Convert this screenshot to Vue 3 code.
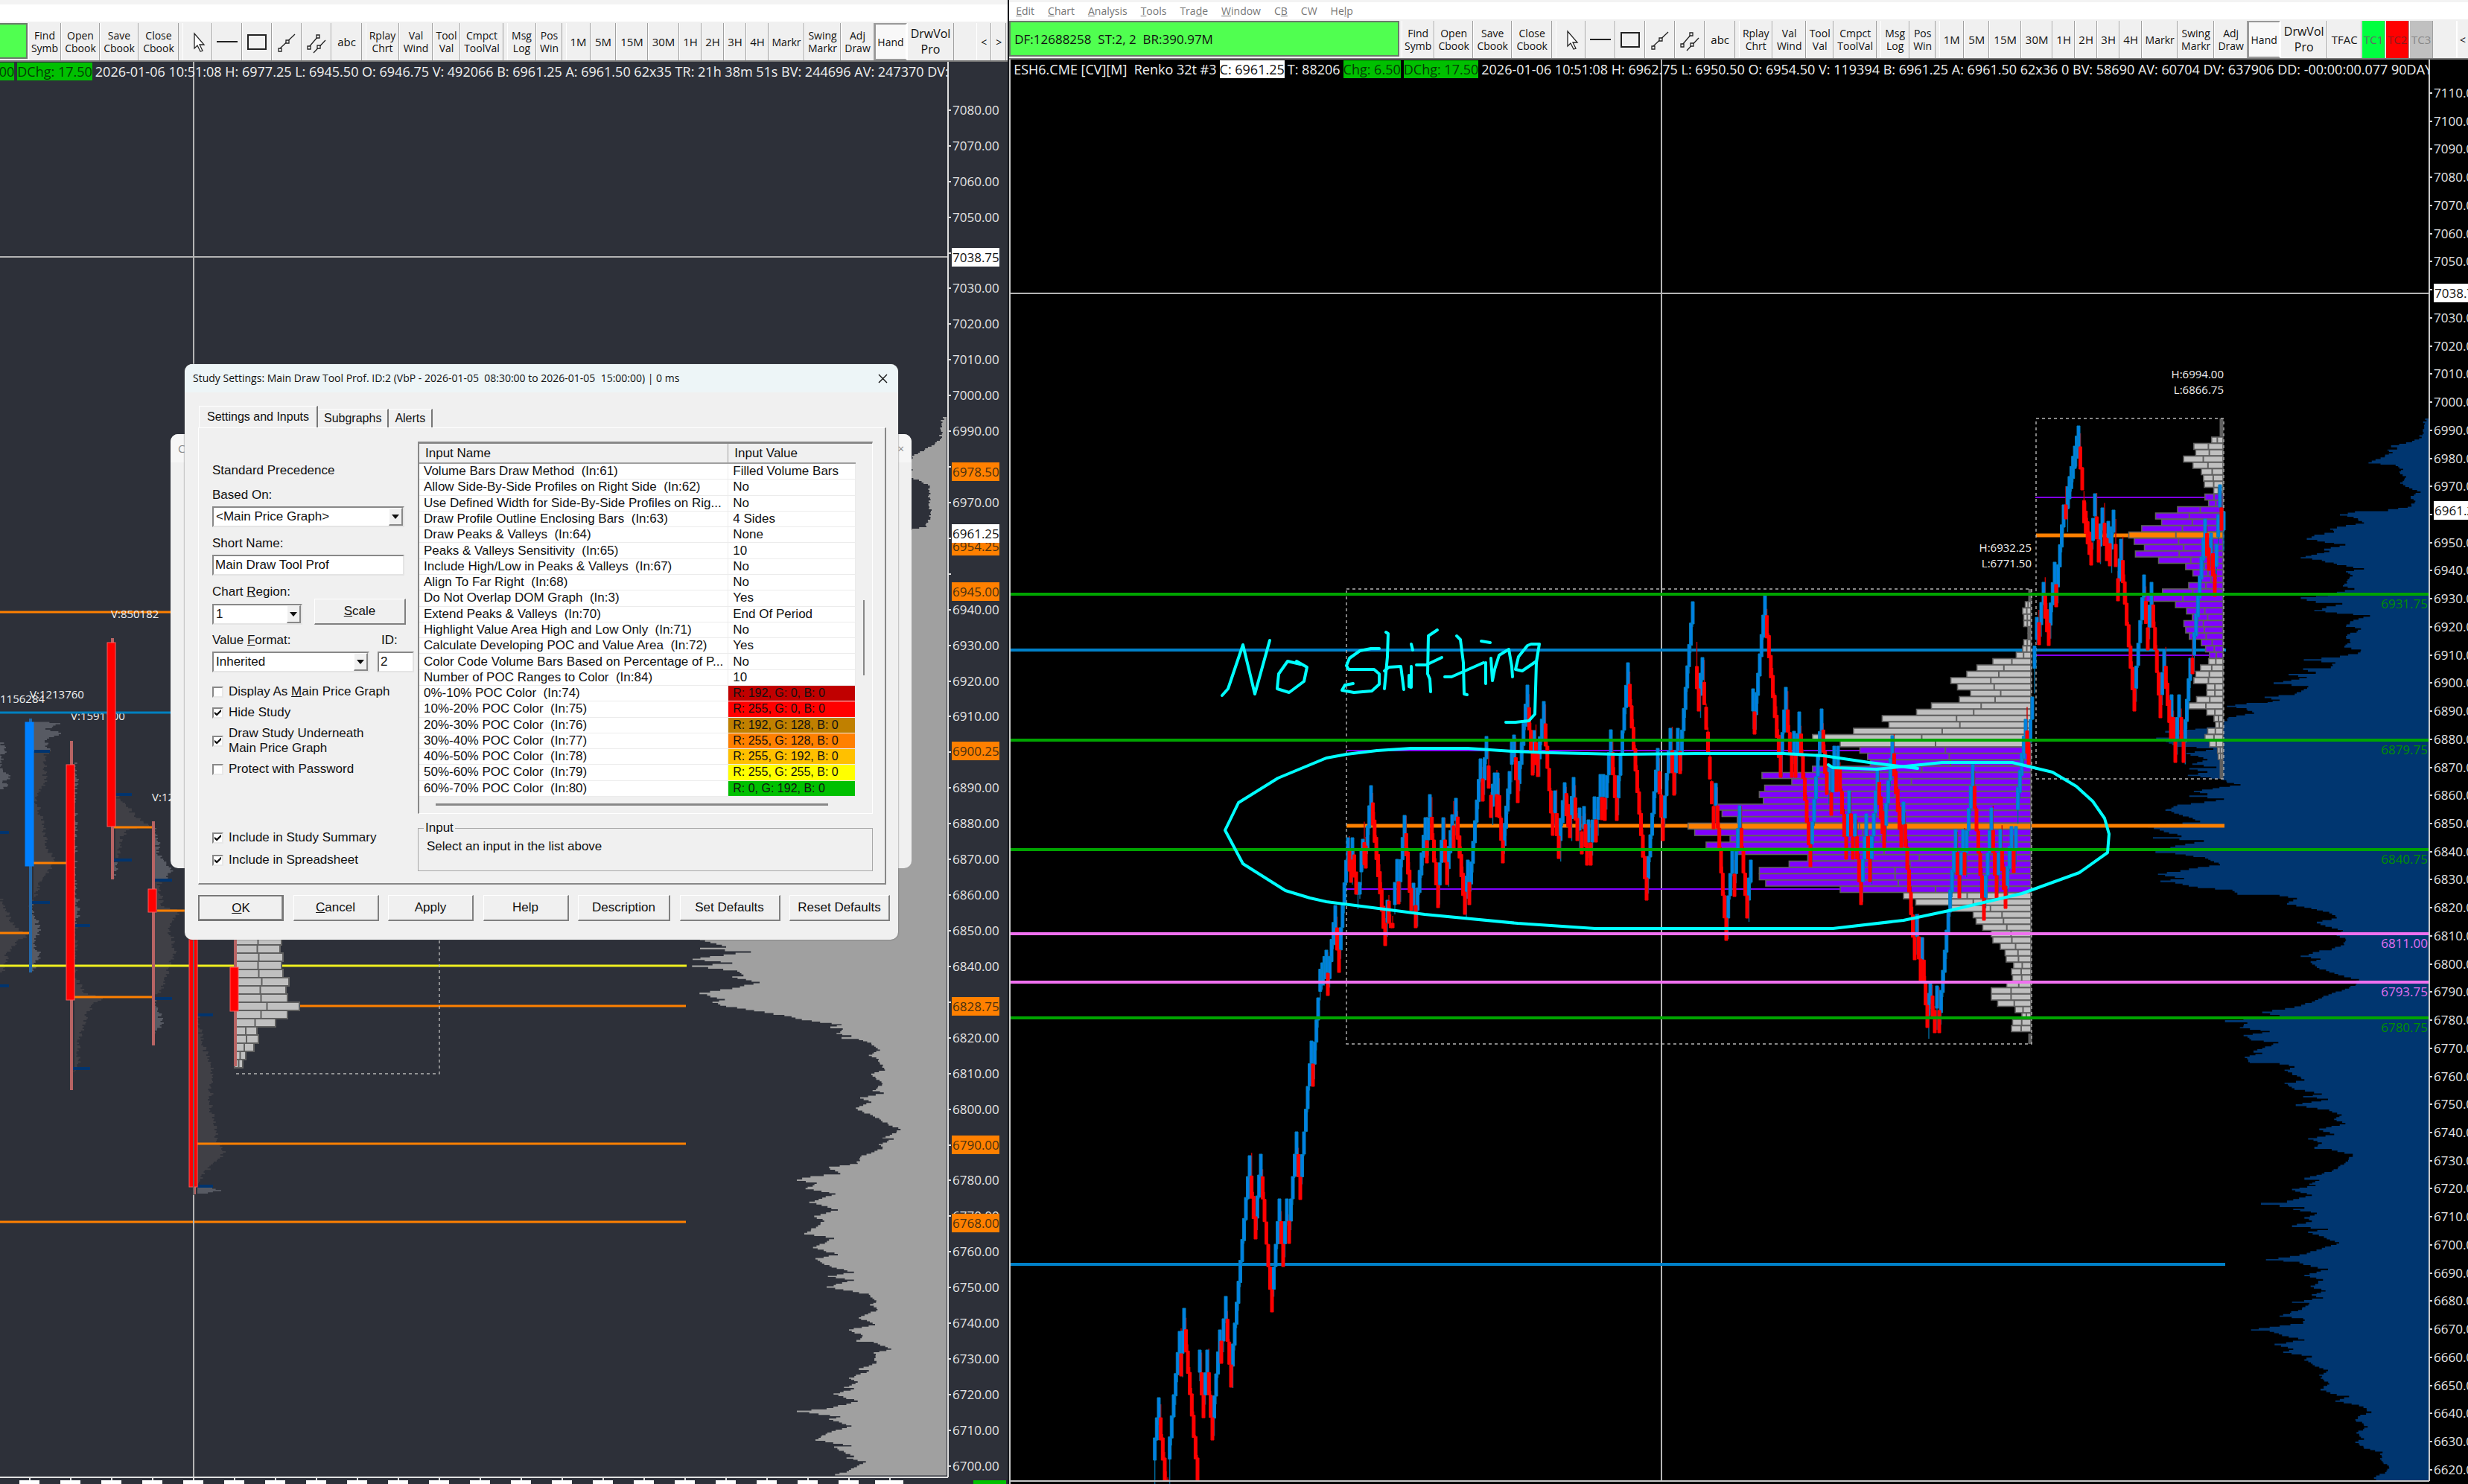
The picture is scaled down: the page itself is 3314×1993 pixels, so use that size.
<script setup>
import { ref } from 'vue'

const inputs = [
  ['Volume Bars Draw Method  (In:61)', 'Filled Volume Bars'],
  ['Allow Side-By-Side Profiles on Right Side  (In:62)', 'No'],
  ['Use Defined Width for Side-By-Side Profiles on Rig...', 'No'],
  ['Draw Profile Outline Enclosing Bars  (In:63)', '4 Sides'],
  ['Draw Peaks & Valleys  (In:64)', 'None'],
  ['Peaks & Valleys Sensitivity  (In:65)', '10'],
  ['Include High/Low in Peaks & Valleys  (In:67)', 'No'],
  ['Align To Far Right  (In:68)', 'No'],
  ['Do Not Overlap DOM Graph  (In:3)', 'Yes'],
  ['Extend Peaks & Valleys  (In:70)', 'End Of Period'],
  ['Highlight Value Area High and Low Only  (In:71)', 'No'],
  ['Calculate Developing POC and Value Area  (In:72)', 'Yes'],
  ['Color Code Volume Bars Based on Percentage of P...', 'No'],
  ['Number of POC Ranges to Color  (In:84)', '10'],
  ['0%-10% POC Color  (In:74)', 'R: 192, G: 0, B: 0', 'c00000'],
  ['10%-20% POC Color  (In:75)', 'R: 255, G: 0, B: 0', 'ff0000'],
  ['20%-30% POC Color  (In:76)', 'R: 192, G: 128, B: 0', 'c08000'],
  ['30%-40% POC Color  (In:77)', 'R: 255, G: 128, B: 0', 'ff8000'],
  ['40%-50% POC Color  (In:78)', 'R: 255, G: 192, B: 0', 'ffc000'],
  ['50%-60% POC Color  (In:79)', 'R: 255, G: 255, B: 0', 'ffff00'],
  ['60%-70% POC Color  (In:80)', 'R: 0, G: 192, B: 0', '00c000'],
]

const commonTools = [
  [['Find Symb', 44], ['Open Cbook', 52], ['Save Cbook', 52], ['Close Cbook', 54]],
  [['@arrow', 40], ['@line', 40], ['@rect', 40], ['@trend', 40], ['@channel', 40], ['abc', 41, 'mid']],
  [['Rplay Chrt', 45], ['Val Wind', 45], ['Tool Val', 37], ['Cmpct ToolVal', 58]],
  [['Msg Log', 39], ['Pos Win', 35]],
]
const timeTools = [
  ['1M', 33, 'mid'], ['5M', 34, 'mid'], ['15M', 43, 'mid'], ['30M', 42, 'mid'], ['1H', 30, 'mid'], ['2H', 30, 'mid'],
  ['3H', 30, 'mid'], ['4H', 30, 'mid'], ['Markr', 48], ['Swing Markr', 49], ['Adj Draw', 45], ['Hand', 44, 'pressed'], ['DrwVol Pro', 63, 'big'],
]
const leftTools = [...commonTools, timeTools]
const rightTools = [
  ...commonTools,
  [...timeTools, ['TFAC', 46, 'mid'], ['TC1', 32, 'tc green'], ['TC2', 32, 'tc red'], ['TC3', 32, 'tc gray']],
]
const menu = ['<u>E</u>dit', '<u>C</u>hart', '<u>A</u>nalysis', '<u>T</u>ools', 'Tra<u>d</u>e', '<u>W</u>indow', 'C<u>B</u>', 'CW', 'He<u>l</u>p']

const basedOn = ref('<Main Price Graph>')
const shortName = ref('Main Draw Tool Prof')
const studyId = ref('2')
const flags = ref({ main: false, hide: true, under: true, protect: false, summary: true, sheet: true })

/* ---- price scales ---- */
const leftY = p => Math.round(1250 + (6850 - p) * 4.792)
const rightY = p => Math.round(1106 + (6850 - p) * 3.773)
const range = (a, b) => Array.from({ length: (a - b) / 10 + 1 }, (_, i) => a - i * 10)
const leftPrices = range(7080, 6700)
const rightPrices = range(7110, 6620)
const leftMarks = [
  [6978.5, '6978.50', 'o'], [6957.75, '6954.25', 'o'], [6945, '6945.00', 'o'], [6900.25, '6900.25', 'o'],
  [6828.75, '6828.75', 'o'], [6790, '6790.00', 'o'], [6768, '6768.00', 'o'], [6961.25, '6961.25', 'w'], [7038.75, '7038.75', 'w'],
]
const leftHidden = new Set([7040, 6980, 6960, 6950, 6900, 6830, 6790])

/* ---- volume outlines: point lists are [offset, row] pairs on a local grid ---- */
const noise = i => { const v = Math.sin(i * 12.9898) * 43758.5453; return v - Math.floor(v) }
function outline(list, ox, oy, sx, sy) {
  const out = []
  for (let i = 0; i < list.length; i += 2) out.push([ox + list[i] / sx, oy + list[i + 1] / sy])
  return out
}
function stepped(points, right, dir = 1, jitter = 5) {
  let d = `M${right} ${points[0][1].toFixed(1)}`
  for (let i = 0; i < points.length - 1; i++) {
    const [x0, y0] = points[i]
    const [x1, y1] = points[i + 1]
    const n = Math.max(1, Math.round((y1 - y0) / 2))
    for (let k = 0; k < n; k++) {
      const x = x0 + (x1 - x0) * (k / n) + (k ? (noise(i * 7 + k) - 0.5) * jitter * dir : 0)
      d += `H${x.toFixed(1)}V${(y0 + (y1 - y0) * ((k + 1) / n)).toFixed(1)}`
    }
  }
  return d + `H${right}Z`
}
const blueTop = [1423,250,1420,280,1403,315,1360,328,1310,338,1330,345,1298,352,1315,360,1275,378,1235,394,1325,402,1350,415,1340,428,1360,440,1340,460,1370,475,1408,490,1375,505,1388,525,1365,540,1300,548,1190,555,1140,565,1200,578,1220,592,1160,600,1108,612,1120,620,1055,632,1030,643,1090,655,1158,663,1088,678,1105,685,1045,698,1010,706,1080,715,1130,728,1220,742,1160,752,1182,765,1150,798,1188,808,1130,820,1100,830,1010,838,1060,850,1148,857,1095,868,1055,880,1130,888,1240,897,1185,912,1160,932,1210,940,1160,965,1175,985,1155,998,1210,1010,1200,1020,1140,1030,1020,1042,1125,1052,1110,1065,1018,1072,1060,1083,970,1090,1030,1100,920,1118,1035,1130,990,1155,890,1165,940,1175,900,1183,830,1186,765,1195,830,1203,855,1217,770,1232,755,1250,740,1262,660,1270,560,1278,620,1290,530,1300,600,1325,720,1335,630,1350,700,1370,650,1385,730,1395,640,1400,700,1410,635,1422,750,1435,765,1445,810,1453,740,1462,655,1475,700,1483,640,1490,755,1500,690,1510,600,1520,565,1535]
const blueLow = [20,12,90,25,160,38,-50,50,85,72,-30,76,175,83,60,95,-20,108,60,113,180,122,240,138,115,148,-10,160,95,170,0,176,60,180,150,190,290,197,310,204,480,209,550,216,510,228,580,236,630,242,680,248,710,260,630,271,690,283,735,290,710,300,745,308,740,322,690,332,640,337,565,349,645,356,605,362,630,374,680,385,740,395,800,403,790,413,760,422,690,435,610,455,540,466,410,478,480,486,400,492,260,498,350,503,320,514,440,523,335,532,365,542,475,548,410,562,375,568,410,573,340,582,360,595,480,597,540,604,500,612,550,625,580,634,500,642,540,655,650,667,575,673,675,679,545,692,680,704,730,715,700,725,745,735,640,748,700,760,595,770,650,780,620,790,690,795,775,806,740,828,690,845,580,861,640,866,600,875,625,878,530,887,610,900,510,914,405,919,480,924,580,929,535,933,630,942,580,952,610,960,530,971,675,979,595,985,670,1000,720,1010,650,1023,560,1038,425,1049,560,1055,605,1063,675,1071,580,1085,655,1095,605,1110,665,1121,610,1130,655,1137,530,1147,600,1150,570,1163,480,1179,575,1185,575,1195,440,1205,365,1211,440,1214,490,1223,580,1234,460,1244,535,1255,495,1262,610,1272,580,1280,640,1297,675,1304,640,1315,680,1335,645,1348,710,1360,760,1364,705,1375,800,1385,850,1400,805,1408,785,1418,835,1434,790,1448,820,1462,785,1470,820,1483,895,1493,885,1508,920,1525,905,1540,860,1552,890,1560]
const blueProfile = stepped([...outline(blueTop, 2680, 460, 2.473, 2.45), ...outline(blueLow, 2900, 1080, 3, 1.717)], 3260)
const grayLow = [-120,60,200,124,285,140,180,144,385,153,220,166,150,173,310,183,148,191,330,204,355,215,310,220,420,234,310,250,178,263,280,280,230,287,285,298,440,313,520,322,590,333,750,347,705,353,755,358,730,370,790,376,750,381,820,386,870,396,905,414,860,428,890,435,905,450,925,467,870,478,915,503,875,522,920,528,825,541,870,552,808,568,885,592,940,612,988,625,915,648,960,650,900,665,915,675,830,695,815,715,700,725,745,742,625,750,570,759,650,767,605,782,725,796,620,818,735,838,640,855,680,868,600,901,720,914,635,938,735,957,645,968,710,990,800,1004,695,1015,800,1025,690,1043,860,1062,890,1080,865,1090,895,1103,820,1125,885,1143,780,1157,835,1172,810,1185,880,1190,950,1208,880,1218,890,1245,820,1260,860,1265,780,1285,815,1295,760,1310,800,1313,718,1327,815,1346,690,1366,570,1373,745,1388,700,1394,790,1412,710,1427,645,1449,790,1465,720,1468,800,1492,770,1497,848,1507,800,1523,780,1530,715,1545]
const grayProfile = stepped([[1266, 560], [1262, 590], [1246, 600], [1225, 612], [1222, 640], [1246, 650], [1250, 690], [1244, 706], [1200, 716], [1190, 740], [1180, 900], [1100, 1100], ...outline(grayLow, 880, 1200, 3, 1.977)], 1271)

/* ---- session profiles drawn as bricks ---- */
const PITCH = 8.5
function bricks(lefts, right, top, ox, sx, from, poc, to) {
  return lefts.map((u, i) => {
    const x = ox + u / sx
    const y = top + i * PITCH
    return { x, y, w: right - x, kind: i === poc ? 'poc' : i >= from && i <= to ? 'va' : 'out' }
  })
}
const mainBricks = bricks([1228,1218,1222,1222,1238,1238,1222,1218,1194,1106,1046,1008,948,973,1022,980,875,819,690,715,582,428,532,606,635,645,428,238,350,248,228,243,70,88,145,-40,-15,118,28,145,410,340,228,228,252,532,770,816,945,1032,1043,1068,1100,1106,1134,1152,1156,1184,1176,1180,1158,1100,1100,1124,1190,1215,1180,1176], 2726, 808, 2280, 2.8, 23, 35, 45)
const sideBricks = bricks([714,655,661,621,652,680,687,690,721,692,704,601,528,548,482,439,457,491,461,538,628,652,672,638,551,485,594,631,650,622,628,640,680,694,707,704,677,661,655,698,698,664,638,698,722,727,701,692,707,734,736], 2984, 587, 2680, 2.473, 9, 15, 34)
const leftBricks = [378, 376, 380, 378, 380, 388, 384, 386, 402, 386, 370, 345, 347, 341, 330, 326].map((r, i) => ({ x: 315, y: 1258 + i * 11, w: r - 315 }))

/* ---- renko path: [x, y] swing points, null starts a new run ---- */
const swings = [[1547,1988],[1555,1877],[1563,1988],[1567,1988],[1583,1788],[1585,1848],[1589,1757],[1607,1988],null,[1610,1843],[1610,1813],[1615,1904],[1620,1813],[1627,1934],[1637,1786],[1639,1831],[1645,1741],[1652,1863],[1677,1552],[1685,1664],[1692,1550],[1707,1762],[1717,1610],[1722,1701],[1727,1610],[1730,1670],[1740,1520],[1745,1611],[1760,1398],[1762,1459],[1769,1340],[1780,1276],[1782,1337],[1792,1216],[1797,1306],[1809,1125],[1813,1185],[1815,1125],[1820,1201],[1825,1185],[1829,1127],[1833,1166],[1840,1055],[1859,1270],[1862,1209],[1864,1240],[1869,1246],[1875,1154],[1877,1214],[1885,1095],[1894,1223],[1897,1186],[1900,1246],[1913,1098],[1915,1159],[1919,1067],[1930,1219],[1937,1098],[1942,1188],[1949,1094],[1951,1139],[1954,1072],[1966,1228],[1970,1155],[1972,1215],[1987,1019],[1990,1076],[1995,989],[2001,1098],[2006,1038],[2009,1097],[2010,1038],[2017,1159],[2026,1036],[2032,987],[2037,1078],[2050,920],[2057,1041],[2059,981],[2064,1043],[2072,942],[2084,1122],[2087,1062],[2092,1153],[2100,1051],[2107,1125],[2112,1044],[2117,1129],[2120,1085],[2123,1147],[2126,1083],[2130,1162],[2132,1101],[2135,1162],[2140,1070],[2142,1131],[2148,1040],[2150,1101],[2152,1040],[2154,1102],[2162,980],[2170,1102],[2185,890],[2210,1209],[2225,1005],[2232,1129],[2242,978],[2247,1068],[2252,978],[2255,1039],[2272,808],null,[2275,865],[2280,955],[2285,883],[2300,1113],[2303,1052],[2317,1263],[2325,1143],[2328,1204],[2335,1082],[2345,1233],[2350,1155],null,[2352,955],[2353,925],[2355,986],[2369,800],[2390,1044],[2397,923],[2405,1044],[2408,982],[2410,1044],[2415,956],[2430,1164],[2445,952],[2452,1067],[2455,1031],[2458,1095],[2462,1002],[2465,1063],[2467,1002],[2478,1154],[2482,1062],[2487,1154],[2490,1093],[2498,1215],[2505,1093],[2510,1184],[2520,1031],[2529,1139],[2540,988],[2552,1138],[2555,1077],[2570,1289],[2573,1228],[2578,1318],[2580,1259],[2587,1380],[2591,1318],[2597,1387],[2600,1324],[2603,1387],[2625,1114],[2630,1206],[2635,1114],[2637,1175],[2648,1026],[2663,1236],[2673,1085],[2680,1206],[2685,1114],[2692,1220],[2700,1110],[2703,1172],[2706,1110],[2719,966],[2723,1027],[2728,936],[2734,829],[2737,866],[2743,782],[2750,867],[2758,755],[2760,815],[2770,678],[2773,697],[2790,572],[2795,658],[2807,759],[2812,663],[2817,755],[2822,682],[2828,753],[2830,700],[2832,760],[2837,685],[2843,807],[2847,724],[2865,955],[2878,772],[2883,873],[2888,782],[2900,964],[2905,872],[2914,993],[2915,933],[2920,1024],[2925,933],[2931,1024],[2940,884],[2943,905],[2960,697],[2965,766],[2968,716],[2973,801],[2980,651],[2982,712],[2985,687]]
const renko = { up: '', down: '', upWick: '', downWick: '' }
for (let i = 0; i < swings.length - 1; i++) {
  const a = swings[i]
  const b = swings[i + 1]
  if (!a || !b) continue
  const rising = b[1] < a[1]
  const span = Math.abs(b[1] - a[1])
  const n = Math.max(1, Math.round((b[0] - a[0]) / 2.5))
  const h = Math.min(30, span)
  for (let k = 1; k <= n; k++) {
    const x = (a[0] + (k * (b[0] - a[0])) / n - 2).toFixed(1)
    const t = ((span - h) * k) / n
    const y = rising ? a[1] - h - t : a[1] + t
    renko[rising ? 'up' : 'down'] += `M${x} ${y.toFixed(1)}h4v${h}h-4z`
    const r = noise(i * 3 + k)
    const len = k === 1 ? 8 + r * 26 : r * 12
    const wx = (+x + 2).toFixed(1)
    if (rising) renko.upWick += `M${wx} ${(y + h).toFixed(1)}v${len.toFixed(0)}`
    else renko.downWick += `M${wx} ${y.toFixed(1)}v-${len.toFixed(0)}`
  }
}

const rightLevels = [[798, 'grn', '6931.75'], [994, 'grn', '6879.75'], [1141, 'grn', '6840.75'], [1254, 'pnk', '6811.00'], [1319, 'pnk', '6793.75'], [1367, 'grn', '6780.75']]

/* ---- left chart candles: x, body top, body bottom, wick top, wick bottom ---- */
const candles = [
  [89, 1027, 1343, 995, 1464, 'r'], [144, 863, 1110, 857, 1181, 'r'], [199, 1194, 1225, 1103, 1404, 'r'],
  [254, 1150, 1594, 1150, 1604, 'r'], [309, 1299, 1358, 1262, 1432, 'r'], [34, 970, 1163, 965, 1306, 'b'],
]
const pocDashes = [[0, 40, 1253], [45, 90, 1159], [100, 205, 1339], [151, 205, 1111], [211, 248, 1223]]
const navyDashes = [[46, 67, 1009], [0, 12, 1118], [41, 67, 1212], [101, 121, 1243], [156, 177, 1067], [152, 177, 1155], [206, 231, 1182], [206, 231, 1341], [266, 286, 1363], [97, 121, 1435], [266, 286, 1593], [0, 12, 1324]]
/* daily outlines hang to the right of their candle */
const shade = (x, pts) => stepped(pts.map(([w, y]) => [x + w, y]), x, 1, 8)
const daily = [
  ['lo', shade(0, [[0, 995], [8, 1003], [2, 1015], [0, 1030], [14, 1041], [3, 1050], [10, 1055], [0, 1060]])],
  ['va', shade(0, [[0, 1205], [8, 1220], [12, 1235], [25, 1248], [38, 1254], [20, 1265], [8, 1280], [10, 1290], [0, 1310]])],
  ['lo', shade(45, [[0, 968], [36, 971], [16, 978], [37, 984], [15, 994], [18, 1003], [20, 1009]])],
  ['va', shade(45, [[18, 1009], [14, 1030], [15, 1050], [5, 1065], [5, 1080], [10, 1100], [15, 1120], [20, 1140], [28, 1155], [25, 1165], [12, 1180], [6, 1195], [0, 1212]])],
  ['lo', shade(41, [[0, 1212], [6, 1230], [11, 1250], [5, 1260], [11, 1282], [6, 1295], [0, 1306]])],
  ['lo', shade(100, [[0, 1022], [3, 1040], [0, 1060], [2, 1190], [4, 1225], [2, 1243]])],
  ['va', shade(100, [[1, 1243], [0, 1310], [12, 1332], [38, 1340], [22, 1350], [12, 1370], [6, 1400], [5, 1435], [0, 1440]])],
  ['va', shade(155, [[0, 1067], [14, 1080], [25, 1095], [45, 1108], [14, 1115], [6, 1125], [4, 1150], [0, 1156]])],
  ['lo', shade(152, [[0, 1156], [5, 1160], [1, 1170], [0, 1180]])],
  ['lo', shade(206, [[0, 1110], [6, 1125], [4, 1145], [14, 1155], [24, 1165], [18, 1180], [0, 1183]])],
  ['va', shade(206, [[8, 1183], [10, 1215], [34, 1223], [22, 1240], [24, 1260], [28, 1275], [20, 1300], [16, 1320], [0, 1341]])],
  ['lo', shade(206, [[0, 1341], [6, 1355], [11, 1375], [2, 1384], [0, 1390]])],
  ['va', shade(265, [[0, 1363], [6, 1400], [18, 1430], [20, 1450], [16, 1480], [22, 1510], [26, 1530], [38, 1546], [26, 1558], [10, 1575], [0, 1593]])],
  ['lo', shade(265, [[0, 1593], [20, 1595], [32, 1598], [0, 1603]])],
]

const at = (list, ox, oy) => { let s = ''; for (let i = 0; i < list.length; i += 2) s += `${(ox + list[i] / 2.8).toFixed(0)},${(oy + list[i + 1] / 2.376).toFixed(0)} `; return s }
const pen = [
  [200,263,168,263,127,270,88,295,76,318,85,330,178,331,198,345,200,378,170,400,103,404,58,397,70,381,100,375],
  [225,211,232,216,230,290,217,393], [217,335,235,322,280,320,290,395],
  [318,250,324,268], [318,320,320,387,311,385,311,350],
  [416,205,384,223,380,345,390,362,391,402], [338,315,375,315,434,292],
  [490,224,503,235,515,310,518,408,529,410], [446,355,470,353,592,310],
  [598,310,600,376], [583,241,617,244],
  [620,294,623,367,632,330,650,285,687,266,697,320,699,355],
  [800,250,770,250,755,254,722,290,712,330,735,334,790,303,802,250,790,310,785,472,762,495,712,500,674,500],
].map(l => at(l, 1780, 760))
const loopA = at([822,647,640,628,470,607,320,598,0,598], 2280, 760) + at([1100,600,850,597,700,592,530,583,320,583,190,590,75,602,0,612], 1780, 760)
const loopB = '1715,1045 1662,1078 1644,1115 1668,1160 1725,1196 1758,1206 ' + at([0,1072,370,1112,720,1140,1010,1158,1568,1158], 1780, 760) + at([505,1158,770,1131,940,1100,1215,1046,1432,980,1537,914,1543,856,1525,806,1480,750,1420,703,1330,657,1178,628,915,627,670,649,505,645,488,635], 2280, 760)
</script>

<template>
  <main class="desktop">
    <section class="win left">
      <div class="strip"></div>
      <div class="blank"></div>
      <div class="toolbar">
        <div class="feed"></div>
        <div v-for="(group, g) in leftTools" :key="g" class="group">
          <button v-for="[label, w, kind] in group" :key="label" type="button" :class="kind" :style="{ width: w + 'px' }" :aria-label="label">
            <svg v-if="label[0] === '@'" width="30" height="34" viewBox="0 0 30 34" fill="none" stroke="#222" stroke-width="1.3">
              <path v-if="label === '@arrow'" d="M11 6v20l4-4 4 8 3-1-4-8h6z" fill="#fff" />
              <path v-else-if="label === '@line'" d="M1 17h28" stroke-width="2" />
              <path v-else-if="label === '@rect'" d="M3 8h24v19H3z" stroke-width="2" />
              <g v-else-if="label === '@trend'"><path d="M6 26L26 7" /><path d="M4 26h4v4H4zM14 15h4v4h-4z" fill="#fff" /></g>
              <g v-else><path d="M5 24L17 10M11 32l16-17" /><path d="M3 23h4v4H3zM15 8h4v4h-4zM16 22h4v4h-4z" fill="#fff" /></g>
            </svg>
            <template v-else>{{ label }}</template>
          </button>
        </div>
        <div class="group pager"><button type="button">&lt;</button><button type="button">&gt;</button></div>
      </div>
      <div class="chart slate">
        <svg class="plot" aria-hidden="true">
          <g transform="translate(0,-83)">
            <path :d="grayProfile" fill="#a0a0a0" />
            <path v-for="([k, d], i) in daily" :key="i" :d="d" :class="'day-' + k" />
            <g stroke="#ff8000" stroke-width="3">
              <path d="M0 822H700M400 1351H921M265 1536H921M0 1641H921" />
              <path v-for="([a, b, y], i) in pocDashes" :key="i" :d="`M${a} ${y}H${b}`" />
            </g>
            <path v-for="([a, b, y], i) in navyDashes" :key="i" :d="`M${a} ${y}H${b}`" stroke="#00346e" stroke-width="4" />
            <text x="149" y="830" class="t15">V:850182</text>
            <text x="40" y="938" class="t15">V:1213760</text>
            <text x="0" y="944" class="t15">1156284</text>
            <text x="95" y="967" class="t15">V:1591100</text>
            <text x="204" y="1076" class="t15">V:1297</text>
            <path d="M0 957H700" stroke="#0080c0" stroke-width="3" />
            <path d="M0 1297H922" stroke="#f0f020" stroke-width="3" />
            <path d="M590 1255V1442H315" class="dash" />
            <g v-for="(b, i) in leftBricks" :key="i" stroke="#606060" stroke-width="2">
              <rect :x="b.x" :y="b.y" :width="b.w" height="11" fill="#c0c0c0" />
              <path :d="`M${b.x + b.w / 2} ${b.y}v11`" />
            </g>
            <path d="M260 83V1984M0 345H1272" stroke="#b4b4b4" stroke-width="2" />
            <g v-for="(c, i) in candles" :key="'c' + i">
              <rect :x="c[0] + 5" :y="c[3]" width="4" :height="c[4] - c[3]" :fill="c[5] === 'r' ? '#b86464' : '#2468a8'" />
              <rect :x="c[0]" :y="c[1]" width="11" :height="c[2] - c[1]" :fill="c[5] === 'r' ? '#ff0000' : '#0080ff'" :stroke="c[5] === 'r' ? '#ff5a5a' : '#0080ff'" />
            </g>
            <path d="M260 1150V1605" stroke="#666" stroke-width="2" />
            <path d="M1273 83V1984M0 1984H1273" stroke="#e0e0e0" stroke-width="2" fill="none" />
            <g v-for="p in leftPrices" :key="p">
              <path :d="`M1273 ${leftY(p)}h4`" stroke="#e0e0e0" stroke-width="2" />
              <text v-if="!leftHidden.has(p)" x="1279" :y="leftY(p) + 6" class="t17">{{ p }}.00</text>
            </g>
            <g v-for="[p, label, k] in leftMarks" :key="label">
              <rect x="1278" :y="leftY(p) - 13" width="64" height="25" :fill="k === 'o' ? '#ff8000' : '#ffffff'" />
              <text x="1279" :y="leftY(p) + 6" class="t17" :class="'mark-' + k">{{ label }}</text>
            </g>
            <g v-for="i in 23" :key="'d' + i">
              <path :d="`M${1250 - i * 55} 1984v5`" stroke="#e0e0e0" stroke-width="2" />
              <rect :x="1236 - i * 55" y="1988" :width="i === 1 ? 0 : 27" height="5" fill="#fff" />
            </g>
            <rect x="1175" y="1988" width="38" height="5" fill="#fff" />
            <rect x="1307" y="1988" width="44" height="5" fill="#00c000" />
          </g>
        </svg>
        <div class="status"><span class="chg">.00</span><span class="chg">DChg: 17.50</span><span>2026-01-06 10:51:08 H: 6977.25 L: 6945.50 O: 6946.75 V: 492066 B: 6961.25 A: 6961.50 62x35 TR: 21h 38m 51s BV: 244696 AV: 247370 DV: 637906</span></div>
      </div>
    </section>

    <section class="win right">
      <div class="strip thin"></div>
      <nav class="menu"><a v-for="m in menu" :key="m" href="#" v-html="m"></a></nav>
      <div class="toolbar">
        <div class="feed">DF:12688258&nbsp; ST:2, 2&nbsp; BR:390.97M</div>
        <div v-for="(group, g) in rightTools" :key="g" class="group">
          <button v-for="[label, w, kind] in group" :key="label" type="button" :class="kind" :style="{ width: w + 'px' }" :aria-label="label">
            <svg v-if="label[0] === '@'" width="30" height="34" viewBox="0 0 30 34" fill="none" stroke="#222" stroke-width="1.3">
              <path v-if="label === '@arrow'" d="M11 6v20l4-4 4 8 3-1-4-8h6z" fill="#fff" />
              <path v-else-if="label === '@line'" d="M1 17h28" stroke-width="2" />
              <path v-else-if="label === '@rect'" d="M3 8h24v19H3z" stroke-width="2" />
              <g v-else-if="label === '@trend'"><path d="M6 26L26 7" /><path d="M4 26h4v4H4zM14 15h4v4h-4z" fill="#fff" /></g>
              <g v-else><path d="M5 24L17 10M11 32l16-17" /><path d="M3 23h4v4H3zM15 8h4v4h-4zM16 22h4v4h-4z" fill="#fff" /></g>
            </svg>
            <template v-else>{{ label }}</template>
          </button>
        </div>
        <div class="group pager"><button type="button">&lt;</button></div>
      </div>
      <div class="chart black">
        <svg class="plot" aria-hidden="true">
          <g transform="translate(-1354,-80)">
            <path :d="blueProfile" fill="#003670" />
            <path d="M1355 394H3261M2230 80V1989" stroke="#b4b4b4" stroke-width="2" />
            <path d="M1355 873H2988M1355 1698H2987" stroke="#0080c8" stroke-width="4" />
            <path d="M1807 1008H2727M1807 1194H2727M2732 668H2985M2732 880H2985" stroke="#8000ff" stroke-width="2" />
            <path d="M1807 1109H2986" stroke="#ff8000" stroke-width="5" />
            <path d="M2733 719H2985" stroke="#ff8000" stroke-width="5" />
            <g v-for="(set, s) in [mainBricks, sideBricks]" :key="s">
              <g v-for="(b, i) in set" :key="i" :class="'brick ' + b.kind">
                <rect :x="b.x" :y="b.y" :width="b.w" height="8" />
                <path :d="`M${b.x + b.w / 2} ${b.y}v8`" />
              </g>
            </g>
            <path d="M2725 791v17M2725 1388v14M2982 562v24M2982 1020v26" stroke="#606060" stroke-width="5" />
            <path d="M1807 791H2727V1402H1807ZM2733 562H2985V1046H2733Z" class="dash" />
            <path :d="renko.upWick" stroke="#006a9c" fill="none" stroke-width="1.4" />
            <path :d="renko.downWick" stroke="#c80000" fill="none" stroke-width="1.4" />
            <path :d="renko.up" fill="#0080e4" stroke="#0080c0" stroke-width="1" />
            <path :d="renko.down" fill="#ff0000" stroke="#ff0000" stroke-width="1" />
            <g v-for="[y, k, label] in rightLevels" :key="label">
              <path :d="`M1355 ${y}H3261`" stroke-width="4" :class="'level-' + k" />
              <text x="3259" :y="y + 19" text-anchor="end" class="t17" :class="'price-' + k">{{ label }}</text>
            </g>
            <text x="2985" y="508" text-anchor="end" class="t15">H:6994.00</text>
            <text x="2985" y="529" text-anchor="end" class="t15">L:6866.75</text>
            <text x="2727" y="741" text-anchor="end" class="t15">H:6932.25</text>
            <text x="2727" y="762" text-anchor="end" class="t15">L:6771.50</text>
            <g fill="none" stroke="#00ffff" stroke-width="4" stroke-linecap="round" stroke-linejoin="round">
              <polyline :points="loopA + loopB" />
              <polyline v-for="(p, i) in pen" :key="i" :points="p" />
              <polyline points="1640,934 1648,925 1668,866 1684,932 1704,860" />
              <polyline points="1745,892 1728,888 1716,905 1714,925 1730,930 1750,915 1754,896 1740,888" />
            </g>
            <path d="M1355 80V1993M3261 80V1989M1355 1989H3261" stroke="#c8c8c8" stroke-width="2" fill="none" />
            <g v-for="p in rightPrices" :key="p">
              <path :d="`M3261 ${rightY(p)}h4`" stroke="#e0e0e0" stroke-width="2" />
              <text v-if="p !== 7040 && p !== 6960" x="3267" :y="rightY(p) + 6" class="t17">{{ p }}.00</text>
            </g>
            <g v-for="[p, label] in [[7038.75, '7038.75'], [6961.25, '6961.25']]" :key="label">
              <rect x="3267" :y="rightY(p) - 13" width="64" height="25" fill="#fff" />
              <text x="3268" :y="rightY(p) + 6" class="t17 mark-w">{{ label }}</text>
            </g>
          </g>
        </svg>
        <div class="status"><span>ESH6.CME [CV][M]&nbsp; Renko 32t #3</span><span class="last">C: 6961.25</span><span>T: 88206</span><span class="chg">Chg: 6.50</span><span class="chg">DChg: 17.50</span><span>2026-01-06 10:51:08 H: 6962.75 L: 6950.50 O: 6954.50 V: 119394 B: 6961.25 A: 6961.50 62x36 0 BV: 58690 AV: 60704 DV: 637906 DD: -00:00:00.077 90DAY PROFILE</span></div>
      </div>
    </section>

    <div class="behind"><div class="behind-bar"><span>C</span><span>×</span></div></div>

    <form class="dialog" @submit.prevent>
      <header class="caption">
        <span>Study Settings: Main Draw Tool Prof. ID:2 (VbP - 2026-01-05&nbsp; 08:30:00 to 2026-01-05&nbsp; 15:00:00) | 0 ms</span>
        <button type="button" class="close" aria-label="Close"><svg width="13" height="13" viewBox="0 0 13 13" stroke="#111" stroke-width="1.4"><path d="M1 1l11 11M12 1L1 12" /></svg></button>
      </header>
      <div class="tabs">
        <button type="button" class="tab active">Settings and Inputs</button>
        <button type="button" class="tab">Subgraphs</button>
        <button type="button" class="tab">Alerts</button>
      </div>
      <div class="panel">
        <div class="fields">
          <p class="head">Standard Precedence</p>
          <label for="based">Based On:</label>
          <div class="pick"><select id="based" v-model="basedOn"><option>&lt;Main Price Graph&gt;</option></select></div>
          <label for="short">Short Name:</label>
          <input id="short" v-model="shortName" type="text" class="box" />
          <label for="region">Chart <u>R</u>egion:</label>
          <div class="line region">
            <div class="pick"><select id="region"><option>1</option></select></div>
            <button type="button" class="btn"><span><u>S</u>cale</span></button>
          </div>
          <div class="line pair"><label for="format">Value <u>F</u>ormat:</label><label for="sid">ID:</label></div>
          <div class="line format">
            <div class="pick"><select id="format"><option>Inherited</option></select></div>
            <input id="sid" v-model="studyId" type="text" class="box" />
          </div>
          <div class="checks">
            <label><input v-model="flags.main" type="checkbox" /><span>Display As <u>M</u>ain Price Graph</span></label>
            <label><input v-model="flags.hide" type="checkbox" /><span>Hide Study</span></label>
            <label><input v-model="flags.under" type="checkbox" /><span>Draw Study Underneath<br />Main Price Graph</span></label>
            <label><input v-model="flags.protect" type="checkbox" /><span>Protect with Password</span></label>
          </div>
          <div class="checks lower">
            <label><input v-model="flags.summary" type="checkbox" /><span>Include in Study Summary</span></label>
            <label><input v-model="flags.sheet" type="checkbox" /><span>Include in Spreadsheet</span></label>
          </div>
        </div>
        <div class="data">
          <div class="list">
            <div class="list-main">
              <table>
                <thead><tr><th>Input Name</th><th>Input Value</th></tr></thead>
                <tbody>
                  <tr v-for="[name, value, color] in inputs" :key="name">
                    <td>{{ name }}</td>
                    <td :class="{ swatch: color }" :style="color ? { background: '#' + color } : null">{{ value }}</td>
                  </tr>
                </tbody>
              </table>
              <div class="vbar"><i></i></div>
            </div>
            <div class="hbar"><i></i></div>
          </div>
          <fieldset><legend>Input</legend>Select an input in the list above</fieldset>
        </div>
      </div>
      <footer class="actions">
        <button type="submit" class="btn ok"><span><u>O</u>K</span></button>
        <button type="button" class="btn"><span><u>C</u>ancel</span></button>
        <button type="button" class="btn">Apply</button>
        <button type="button" class="btn">Help</button>
        <button type="button" class="btn wide">Description</button>
        <button type="button" class="btn wider">Set Defaults</button>
        <button type="button" class="btn wider">Reset Defaults</button>
      </footer>
    </form>
  </main>
</template>

<style>
body { margin: 0; background: #000; overflow: hidden; }
</style>

<style scoped>
.desktop { position: relative; display: flex; height: 100vh; overflow: hidden; font-family: "Open Sans", "Noto Sans", sans-serif; font-size: 14px; color: #111; }
button, input, select { font: inherit; color: inherit; margin: 0; }
.win { display: flex; flex-direction: column; overflow: hidden; min-width: 0; box-sizing: border-box; }
.left { flex: 1354 1 0; border-right: 2px solid #16181d; }
.right { flex: 1960 1 0; }
.strip { height: 6px; background: #f3f3f3; }
.strip.thin { height: 3px; }
.blank { height: 23px; background: #fff; }
.menu { height: 23px; background: #fff; display: flex; gap: 18px; align-items: center; padding-left: 9px; line-height: 20px; }
.menu a { color: #777; text-decoration: none; white-space: pre; }
.toolbar { height: 54px; box-sizing: border-box; background: #f0f0f0; display: flex; border-bottom: 2px solid #777; padding-top: 2px; overflow: hidden; flex: none; }
.feed { flex: none; width: 37px; height: 48px; box-sizing: border-box; background: #50ff50; border: solid #6a7a6a; border-width: 2px 2px 2px 0; margin-right: 1px; }
.right .feed { width: 524px; border-left-width: 2px; font-size: 17px; line-height: 46px; padding-left: 5px; white-space: pre; margin-right: 3px; }
.group { display: flex; flex: none; margin-right: 5px; }
.toolbar button { flex: none; box-sizing: border-box; padding: 0; border: 0; border-right: 1px solid #a0a0a0; border-left: 1px solid #fff; background: #f0f0f0; line-height: 17px; display: flex; align-items: center; justify-content: center; text-align: center; }
.toolbar button.mid { font-size: 15px; }
.toolbar button.big { font-size: 16px; line-height: 21px; }
.toolbar button.pressed { background: #f8f8f8; border: 2px solid #999; border-right-color: #fff; }
.toolbar button.tc { font-size: 15px; color: #666; }
.toolbar button.green { background: #00ff40; }
.toolbar button.red { background: #ff0000; color: #8c1a1a; }
.toolbar button.gray { background: #c0c0c0; color: #888; }
.pager { margin-left: auto; margin-right: 2px; }
.pager button { width: 20px; }
.right .pager { margin-right: 0; }
.right .pager button { width: 16px; border-left: 2px solid #fff; border-right: 0; }
.chart { position: relative; flex: 1; min-height: 0; overflow: hidden; }
.slate { background: #2d3039; }
.black { background: #000; }
.plot { display: block; width: 100%; height: 100%; }
.status { position: absolute; top: 1px; left: 0; display: flex; gap: 4px; width: 1272px; overflow: hidden; white-space: pre; color: #f0f0f0; font-size: 18px; line-height: 24px; }
.right .status { left: 6px; width: auto; right: 53px; }
.left .status span:first-child { margin-left: -6px; }
.chg { background: #00c000; color: #053c05; }
.last { background: #fff; color: #111; }
.t15 { font-size: 15px; fill: #f0f0f0; }
.t17 { font-size: 17px; fill: #e4e4e4; }
.mark-o { fill: #4a3010; }
.mark-w { fill: #111; }
.day-va { fill: #404046; }
.day-lo { fill: #575a63; }
.dash { fill: none; stroke: #b4b4b4; stroke-width: 1.4; stroke-dasharray: 4 4; }
.brick rect { stroke: #606060; stroke-width: 1.6; }
.brick path { stroke: #606060; stroke-width: 2; }
.out rect { fill: #c0c0c0; }
.va rect { fill: #8000ff; }
.poc rect { fill: #ff8000; }
.level-grn { stroke: #00a400; }
.level-pnk { stroke: #f070f0; }
.price-grn { fill: #009000; }
.price-pnk { fill: #e070f0; }

.behind { position: absolute; left: 229px; top: 583px; width: 995px; height: 583px; background: #f0f0f0; border-radius: 10px; overflow: hidden; }
.behind-bar { height: 38px; background: #f6f6f6; display: flex; justify-content: space-between; align-items: center; padding: 0 10px; color: #888; font-size: 15px; }

.dialog { position: absolute; left: 248px; top: 489px; width: 958px; height: 773px; background: #f0f0f0; border-radius: 10px; overflow: hidden; font-family: "Liberation Sans", sans-serif; font-size: 17px; line-height: 20px; box-shadow: 0 0 2px #555; display: flex; flex-direction: column; }
.caption { height: 38px; background: #edf5f7; display: flex; align-items: center; justify-content: space-between; padding: 0 14px 0 11px; font-family: "Open Sans", sans-serif; font-size: 14px; white-space: pre; flex: none; }
.close { border: 0; background: none; padding: 0; display: flex; }
.tabs { display: flex; align-items: flex-end; padding: 18px 0 0 19px; height: 29px; font-size: 16px; }
.tab { border: 0; border-right: 2px solid #777; border-top: 1px solid #fff; background: none; padding: 2px 8px; height: 25px; line-height: 20px; white-space: pre; }
.tab.active { height: 29px; padding: 2px 10px; border-left: 1px solid #fff; }
.panel { margin: 0 16px 0 18px; height: 614px; box-sizing: border-box; border: solid; border-width: 1px 2px 2px 1px; border-color: #fff #888 #888 #fff; display: flex; gap: 4px; padding: 18px 16px 0 18px; }
.fields { width: 272px; flex: none; display: flex; flex-direction: column; }
.fields > label, .pair { height: 20px; margin: 12px 0 5px; }
.fields > .head { margin: 29px 0 0; height: 21px; }
.line { display: flex; }
.box, .pick { box-sizing: border-box; height: 28px; width: 258px; background: #fff; border: 2px solid; border-color: #888 #e4e4e4 #e4e4e4 #888; padding: 0 0 0 2px; border-radius: 0; }
.pick { position: relative; padding: 0; }
.pick select { appearance: none; width: 100%; height: 24px; border: 0; background: none; padding: 0 0 0 3px; border-radius: 0; }
.pick::after { content: ""; position: absolute; right: 0; top: 0; width: 19px; height: 24px; background: #f0f0f0; border: solid; border-width: 1px 2px 2px 1px; border-color: #fff #888 #888 #fff; box-sizing: border-box; pointer-events: none; }
.pick::before { content: ""; position: absolute; z-index: 1; right: 5px; top: 9px; border: 5px solid transparent; border-top: 6px solid #111; border-bottom: 0; pointer-events: none; }
.region { gap: 16px; align-items: flex-end; margin-top: -6px; }
.region .pick { width: 121px; }
.region .btn { width: 123px; }
.region + .pair { margin-top: 11px; }
.pair label:first-child { width: 227px; }
.format { gap: 11px; }
.format .pick { width: 211px; }
.format .box { width: 49px; }
.checks { display: flex; flex-direction: column; gap: 8px; margin-top: 16px; }
.checks.lower { margin-top: 72px; gap: 10px; }
.checks label { display: flex; align-items: center; gap: 7px; white-space: pre; }
.checks input { appearance: none; width: 15px; height: 15px; background: #fff; border: 2px solid; border-color: #888 #e8e8e8 #e8e8e8 #888; display: flex; align-items: center; justify-content: center; }
.checks input:checked::before { content: ""; width: 9px; height: 9px; background: #111; clip-path: polygon(0 35%, 35% 65%, 100% 0, 100% 35%, 35% 100%, 0 70%); }
.btn { box-sizing: border-box; height: 35px; width: 115px; padding: 0; background: #f0f0f0; border: solid; border-width: 1px 2px 2px 1px; border-color: #fff #808080 #808080 #fff; border-radius: 0; white-space: pre; }
.btn.ok { border: 2px solid #777; box-shadow: inset -1px -1px #888, inset 1px 1px #fff; }
.btn.wide { width: 124px; }
.btn.wider { width: 135px; }
.data { flex: 1; min-width: 0; }
.list { height: 500px; box-sizing: border-box; border: solid; border-width: 3px 1px 1px 2px; border-color: #888 #fff #fff #888; }
.list-main { display: flex; height: 474px; }
table { flex: 1; height: 474px; border-collapse: collapse; table-layout: fixed; }
th { height: 26px; padding: 0 8px; text-align: left; font-weight: 400; border-bottom: 2px solid #a0a0a0; box-sizing: border-box; overflow: hidden; white-space: pre; }
th:first-child { width: 379px; border-right: 1px solid #a0a0a0; }
td { background: #fff; padding: 0 6px; line-height: 20px; white-space: pre; border: 1px solid #ececec; border-left: 0; overflow: hidden; }
.swatch { font-size: 16px; }
.vbar { width: 22px; flex: none; }
.vbar i { display: block; width: 2px; height: 101px; margin: 210px 0 0 10px; background: #888; }
.hbar i { display: block; height: 3px; width: 527px; margin: 9px 0 0 22px; background: #888; }
fieldset { margin: 9px 0 0; height: 68px; box-sizing: border-box; border: 1px solid #a8a8a8; padding: 5px 11px; }
legend { padding: 0 2px; margin-left: -4px; }
.actions { display: flex; justify-content: space-between; padding: 14px 11px 0 18px; }
</style>
